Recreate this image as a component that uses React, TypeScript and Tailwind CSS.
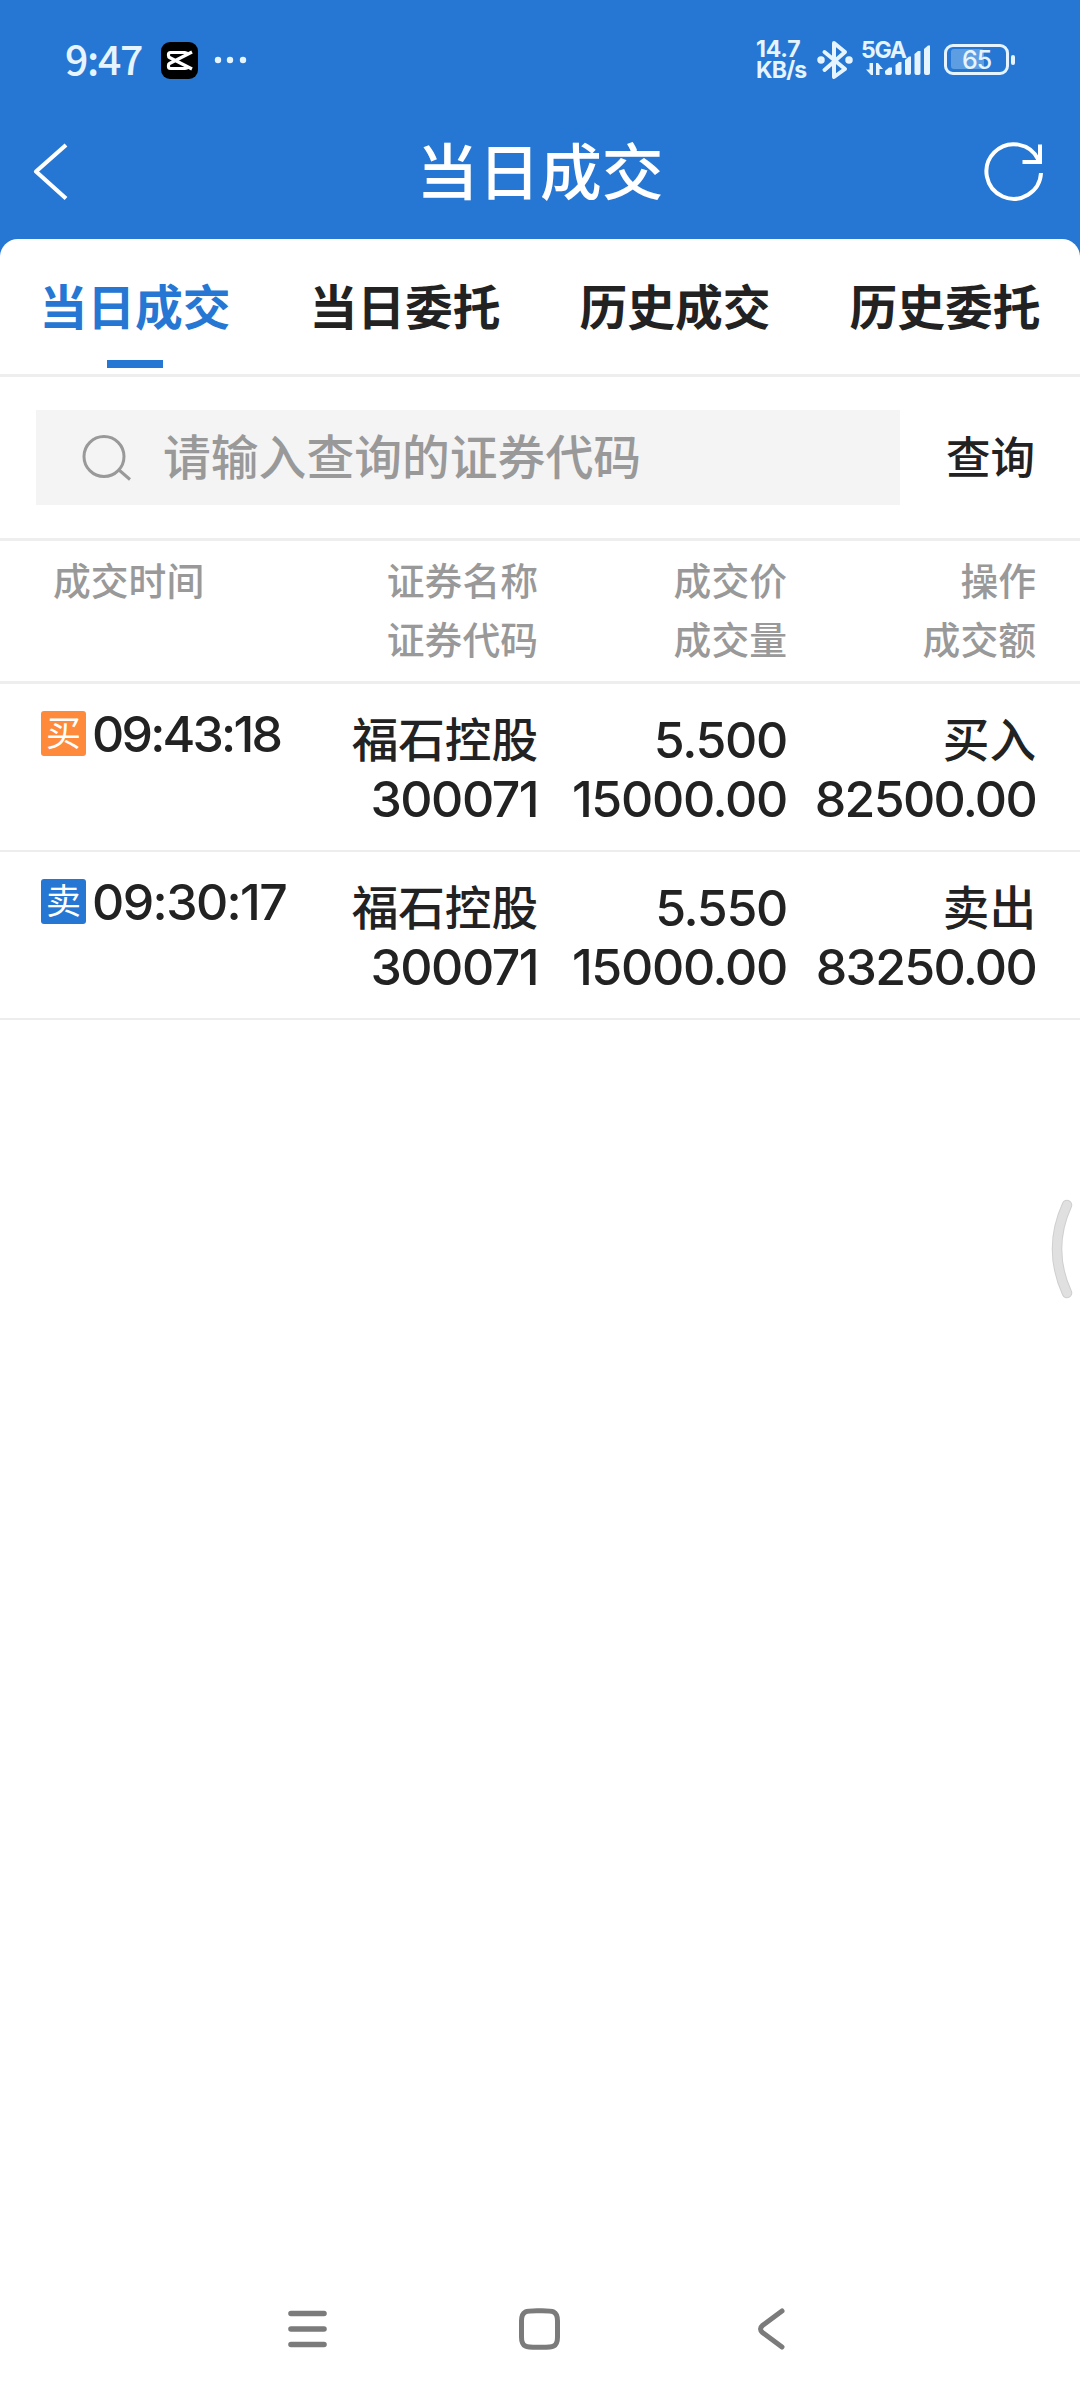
import React, { useState } from 'react';

interface Trade {
  side: 'buy' | 'sell';
  time: string;
  name: string;
  code: string;
  price: string;
  volume: string;
  amount: string;
}

const TABS = ['当日成交', '当日委托', '历史成交', '历史委托'];

const TRADES: Trade[] = [
  { side: 'buy', time: '09:43:18', name: '福石控股', code: '300071', price: '5.500', volume: '15000.00', amount: '82500.00' },
  { side: 'sell', time: '09:30:17', name: '福石控股', code: '300071', price: '5.550', volume: '15000.00', amount: '83250.00' },
];

const StatusBar: React.FC = () => (
  <div className="flex h-[104px] items-start pt-[36px] pl-[65px] text-[#e6f4ff]">
    <span className="w-[96px] font-['Noto_Sans_CJK_SC',sans-serif] text-[41px] leading-[43px] font-medium tracking-[-1.300px]">9:47</span>
    <svg className="mt-[6px] h-[37px] w-[37px]" viewBox="0 0 37 37" fill="none">
      <rect width="37" height="37" rx="9" fill="#000" />
      <path d="M31 10 L8.500 21.500 Q7.500 22 7.500 23.500 V24.500 Q7.500 26.500 9.500 26.500 H24 Q26 26.500 26.500 25 M31 27 L8.500 15.500 Q7.500 15 7.500 13.500 V12.500 Q7.500 10.500 9.500 10.500 H24 Q26 10.500 26.500 12" stroke="#fff" strokeWidth="3.200" />
    </svg>
    <svg className="mt-[20px] ml-[13px] h-[8px] w-[36px]" viewBox="0 0 36 8" fill="currentColor">
      <circle cx="7" cy="4" r="3.200" />
      <circle cx="19" cy="4" r="3.200" />
      <circle cx="32" cy="4" r="3.200" />
    </svg>
    <div className="mt-[3px] ml-[509px] w-[61px] text-[23px] leading-[21px] font-bold">
      <div className="tracking-[-0.200px]">14.7</div>
      <div className="tracking-[-0.800px]">KB/s</div>
    </div>
    <svg className="mt-[4px] h-[40px] w-[36px]" viewBox="0 0 36 40" fill="none" stroke="currentColor" strokeWidth="4" strokeLinejoin="round" strokeLinecap="round">
      <path d="M7.500 12 L28 29 L17 37 V3 L28 12 L7.500 30" />
      <circle cx="4" cy="20" r="2" strokeWidth="3.500" />
      <circle cx="32" cy="20" r="2" strokeWidth="3.500" />
    </svg>
    <div className="relative ml-[8px] h-[48px] w-[70px]">
      <span className="absolute top-[2px] left-0 text-[23px] leading-[24px] font-bold tracking-[-1.200px]">5GA</span>
      <svg className="h-[48px] w-[70px]" viewBox="861 36 70 48" fill="currentColor">
        <path d="M869.500 63 H873 V75 H871 L866 69.500 H869.500Z M876 63 H878 L883 69 H879.500 V75 H876Z" />
        <path d="M885 71 L889 67.500 H892 V73 Q892 75 890 75 H887 Q885 75 885 73Z" />
        <path d="M895.500 65 L899 62 H901.500 V73 Q901.500 75 899.500 75 H897.500 Q895.500 75 895.500 73Z" />
        <path d="M905 60 L909 56.500 H911 V73 Q911 75 909 75 H907 Q905 75 905 73Z" />
        <path d="M914.500 54 L918 51 H920.500 V73 Q920.500 75 918.500 75 H916.500 Q914.500 75 914.500 73Z" />
        <path d="M924 49 L928 45.500 H930 V73 Q930 75 928 75 H926 Q924 75 924 73Z" />
      </svg>
    </div>
    <div className="mt-[8px] ml-[13px] flex items-center">
      <div className="relative h-[31px] w-[65px] rounded-[9px] border-[3px] border-current">
        <div className="absolute top-[2px] left-[4px] h-[20px] w-[33px] rounded-[3px] bg-[#5d9ee3]" />
        <span className="absolute inset-0 text-center text-[25px] leading-[27px] font-medium tracking-[-1px]">65</span>
      </div>
      <div className="ml-[2px] h-[10px] w-[4px] rounded-[2px] bg-current" />
    </div>
  </div>
);

const TitleBar: React.FC = () => (
  <div className="flex h-[135px] items-start justify-between px-[33px] text-white">
    <svg className="mt-[37px] h-[64px] w-[64px]" viewBox="33 141 64 64" fill="none" stroke="currentColor" strokeWidth="4.200">
      <path d="M66 145 L36 171.500 L66 198.500" strokeLinejoin="round" />
    </svg>
    <h1 className="mt-[34px] text-[61.800px] leading-[70px] font-medium">当日成交</h1>
    <svg className="mt-[37px] h-[64px] w-[64px]" viewBox="983 141 64 64" fill="none" stroke="currentColor" strokeWidth="4">
      <path d="M1041 173 A27.300 27.300 0 1 1 1038.500 160" />
      <path d="M1040 144.500 V162 H1022.500" />
    </svg>
  </div>
);

const HeaderCell: React.FC<{ lines: string[] }> = ({ lines }) => (
  <div className="text-right text-[37.800px] leading-[59px] font-medium text-[#999999]">
    {lines.map(line => (
      <div key={line}>{line}</div>
    ))}
  </div>
);

const TradeRow: React.FC<{ trade: Trade }> = ({ trade }) => {
  const isBuy = trade.side === 'buy';

  return (
    <div className="grid h-[168px] grid-cols-[497px_249px_249px] border-b-2 border-[#ededed] pl-[41px]">
      <div className="flex">
        <div className="flex pt-[27px]">
          <span className={`h-[45px] w-[45px] rounded-[3px] text-center text-[35px] leading-[44px] font-normal text-white ${isBuy ? 'bg-[#ff8a3c]' : 'bg-[#2577d3]'}`}>
            {isBuy ? '买' : '卖'}
          </span>
          <span className={`ml-[6px] text-[50px] leading-[47px] font-medium ${isBuy ? 'tracking-[-2.800px]' : 'tracking-[-1.600px]'}`}>{trade.time}</span>
        </div>
        <div className="ml-auto pt-[27px] text-right leading-[59px] font-medium">
          <div className="text-[46.600px]">{trade.name}</div>
          <div className="text-[50px] tracking-[-1.500px]">{trade.code}</div>
        </div>
      </div>
      <div className="pt-[27px] text-right text-[50px] leading-[59px] font-medium tracking-[-1.300px]">
        <div>{trade.price}</div>
        <div>{trade.volume}</div>
      </div>
      <div className="pt-[27px] text-right leading-[59px] font-medium">
        <div className="text-[46.600px]">{isBuy ? '买入' : '卖出'}</div>
        <div className="text-[50px] tracking-[-1.700px]">{trade.amount}</div>
      </div>
    </div>
  );
};

const NavBar: React.FC = () => (
  <div className="flex h-[142px] items-center justify-center gap-[184px] text-[#7b7b7b]">
    <svg className="h-[52px] w-[48px]" viewBox="0 0 48 52" fill="none" stroke="currentColor" strokeWidth="5.600" strokeLinecap="round">
      <path d="M7 10.500 H40 M7 26 H40 M7 41.500 H40" />
    </svg>
    <svg className="h-[52px] w-[48px]" viewBox="0 0 48 52" fill="none" stroke="currentColor" strokeWidth="5">
      <path d="M23.500 7.700 C36 7.700 41.500 7 41.500 18 V34 C41.500 45 36 44.300 23.500 44.300 C11 44.300 5.500 45 5.500 34 V18 C5.500 7 11 7.700 23.500 7.700Z" />
    </svg>
    <svg className="h-[52px] w-[48px]" viewBox="0 0 48 52" fill="none" stroke="currentColor" strokeWidth="5" strokeLinecap="round">
      <path d="M34 8 L14.500 22.500 Q10.500 26 14.500 29.500 L34 44" />
    </svg>
  </div>
);

export default function App() {
  const [activeTab, setActiveTab] = useState(0);
  const [keyword, setKeyword] = useState('');

  return (
    <div className="relative flex h-[2400px] w-[1080px] flex-col bg-[#2577d3] font-['Inter','Noto_Sans_CJK_SC',sans-serif] text-[#222222]">
      <StatusBar />
      <TitleBar />

      <main className="flex flex-1 flex-col rounded-t-[18px] bg-white">
        <nav className="grid h-[138px] grid-cols-4 border-b-[3px] border-[#eeeeee]">
          {TABS.map((tab, index) => (
            <button
              key={tab}
              type="button"
              onClick={() => setActiveTab(index)}
              className={`flex flex-col items-center pt-[40px] text-[47.800px] leading-[58px] font-bold ${index === activeTab ? 'text-[#2577d3]' : ''}`}
            >
              {tab}
              {index === activeTab && <span className="mt-[23px] h-[8px] w-[56px] bg-[#2577d3]" />}
            </button>
          ))}
        </nav>

        <div className="flex h-[164px] items-start border-b-[3px] border-[#eeeeee] pt-[33px] pr-[45px] pl-[36px]">
          <label className="flex h-[95px] w-[864px] items-center bg-[#f4f4f4] pl-[45px]">
            <svg className="h-[50px] w-[52px] shrink-0" viewBox="0 0 52 50" fill="none" stroke="#999999" strokeWidth="3">
              <circle cx="23" cy="23.500" r="20" />
              <path d="M38 37 L49 46.500" />
            </svg>
            <input
              value={keyword}
              onChange={e => setKeyword(e.target.value)}
              placeholder="请输入查询的证券代码"
              className="mt-[3px] ml-[30px] h-[70px] min-w-0 flex-1 text-[47.800px] font-medium outline-none placeholder:text-[#999999]"
            />
          </label>
          <button type="button" className="mt-[18px] ml-auto text-[44.500px] leading-[60px] font-medium">查询</button>
        </div>

        <div className="grid h-[143px] grid-cols-[497px_249px_249px] border-b-[3px] border-[#eeeeee] pt-[11px] pl-[41px]">
          <div className="flex justify-between pl-[12px]">
            <HeaderCell lines={['成交时间']} />
            <HeaderCell lines={['证券名称', '证券代码']} />
          </div>
          <HeaderCell lines={['成交价', '成交量']} />
          <HeaderCell lines={['操作', '成交额']} />
        </div>

        {TRADES.map(trade => (
          <TradeRow key={trade.time} trade={trade} />
        ))}

        <div className="mt-auto">
          <NavBar />
        </div>
      </main>

      {/* edge gesture handle */}
      <svg className="absolute top-[1195px] right-0 h-[108px] w-[32px]" viewBox="0 0 32 108" fill="none" strokeLinecap="round">
        <path d="M19 10 Q-1 54 19 98" stroke="#cfcfcf" strokeWidth="10.500" />
        <path d="M19 10 Q-1 54 19 98" stroke="#e0e0e0" strokeWidth="8.500" />
      </svg>
    </div>
  );
}
